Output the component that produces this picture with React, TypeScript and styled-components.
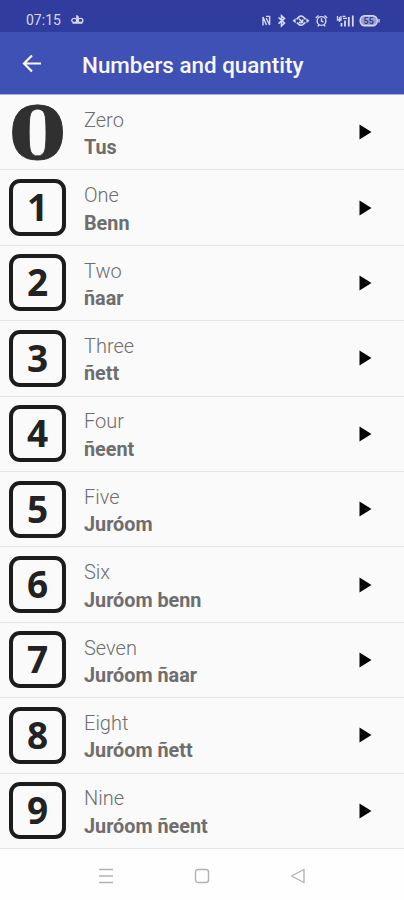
import React from "react";
import styled, { createGlobalStyle } from "styled-components";

const GlobalStyle = createGlobalStyle`
  body { margin: 0; background: #fff; font-family: Roboto, sans-serif; }
  * { box-sizing: border-box; }
`;

const Screen = styled.div`
  width: 404px;
  height: 900px;
  display: flex;
  flex-direction: column;
  overflow: hidden;
  background: #fefefe;
`;

const StatusBar = styled.header`
  height: 32px;
  flex: none;
  display: flex;
  align-items: flex-end;
  justify-content: space-between;
  padding: 0 23px 4px 26px;
  background: #303d9e;
  color: #d5d9f5;
`;

const StatusGroup = styled.div<{ $gap: number }>`
  display: flex;
  align-items: center;
  gap: ${(p) => p.$gap}px;
  height: 16px;
`;

const Clock = styled.span`
  font-size: 14px;
  line-height: 16px;
`;

const AppBar = styled.div`
  height: 63px;
  flex: none;
  display: flex;
  align-items: center;
  padding-left: 20px;
  gap: 38px;
  background: #3f51b5;
  border-bottom: 1px solid #a9aee0;
  color: #f7f7ff;
`;

const Title = styled.h1`
  margin: 4px 0 0;
  font-size: 22.4px;
  font-weight: 500;
  line-height: 28px;
  white-space: nowrap;
`;

const List = styled.main`
  flex: none;
  height: 754px;
  display: grid;
  grid-template-rows: repeat(10, 75.4px);
  background: #fafafa;
`;

const Row = styled.div`
  display: flex;
  align-items: center;
  border-bottom: 1.6px solid #e4e4e4;
  padding: 0 32px 0 9px;
`;

const DigitTile = styled.div`
  width: 57px;
  height: 57px;
  flex: none;
  display: flex;
  align-items: center;
  justify-content: center;
  border: 4px solid #1c1c1c;
  border-radius: 11px;
  color: #222;
  font: 700 37px/48px "Noto Sans", sans-serif;
  padding-bottom: 1px;
`;

const ZeroTile = styled.div`
  width: 57px;
  height: 57px;
  flex: none;
  display: flex;
  align-items: center;
  justify-content: center;
  color: #303030;
  font: 700 72px/57px "DejaVu Serif", serif;
  -webkit-text-stroke: 0.8px #303030;
  padding-top: 2px;
  transform: scaleX(1.15);
`;

const Words = styled.div`
  flex: 1;
  margin: 4px 0 0 18px;
  color: #6e6e6e;
  font-size: 20px;
  line-height: 27.4px;
  white-space: nowrap;
`;

const English = styled.div`
  font-weight: 300;
`;

const Wolof = styled.div`
  font-weight: 700;
  font-size: 19.8px;
`;

const NavBar = styled.nav`
  flex: 1;
  display: flex;
  align-items: center;
  justify-content: center;
  gap: 80px;
  padding-top: 3px;
`;

const entries = [
  ["Zero", "Tus"],
  ["One", "Benn"],
  ["Two", "ñaar"],
  ["Three", "ñett"],
  ["Four", "ñeent"],
  ["Five", "Juróom"],
  ["Six", "Juróom benn"],
  ["Seven", "Juróom ñaar"],
  ["Eight", "Juróom ñett"],
  ["Nine", "Juróom ñeent"],
];

const NotificationIcon = () => (
  <svg width="13" height="12" viewBox="0 0 13 12" fill="none" stroke="currentColor" strokeWidth="1.3">
    <ellipse cx="3.3" cy="6.4" rx="2.5" ry="2" />
    <ellipse cx="9.4" cy="6.4" rx="2.5" ry="2" />
    <path d="M5.9 1v7.8M7 2v6M1.5 9h10" />
  </svg>
);

const StatusIcons = () => (
  <svg width="120" height="16" viewBox="261 12 120 16" fill="none" stroke="currentColor" strokeWidth="1.4">
    <path d="M263 25.5V17l3.5 8M266 16.4h3.6V25l-3.4-7" />
    <path d="M278.5 17.5l6 5.5-3 2.8v-10l3 2.6-6 5.2" strokeWidth="1.6" />
    <path d="M292.8 20.7l2.6-2v4zM309.2 20.7l-2.6-2v4z" fill="currentColor" strokeWidth=".5" />
    <path d="M296.5 19.4l2.7-2.8q2-1.3 4 .2l2.4 2.6M296.8 22.6l2.6 2.2q1.8 1 3.5-.2l2.4-2.2M299 18.8l4 4M299 22c2 1.5 4.2.3 3.7-2.6" strokeWidth="1.6" />
    <circle cx="321.5" cy="21" r="4.4" />
    <path d="M321.5 18.3V21l2 1.2M315.8 18l2.7-2.4M327.2 18l-2.7-2.4M317.8 26.4l1.4-1.7M325.2 26.4l-1.4-1.7" />
    <path d="M337.5 16v4h3.5v-4M339.5 17v5M342.5 16.4h3M343 18.4h4" strokeWidth="1.3" />
    <path d="M341.5 26.5v-3.5M345 26.5v-6M348.8 26.5V17M352.8 26.5V15.5" strokeWidth="1.8" />
    <rect x="360.2" y="15.8" width="17" height="10" rx="4.5" fill="#9aa1d2" />
    <path d="M379 19v3.6" />
    <text x="368.7" y="24" fill="#303d8f" stroke="none" fontSize="9" fontWeight="700" fontFamily="Roboto, sans-serif" textAnchor="middle">55</text>
  </svg>
);

const BackArrow = () => (
  <svg width="24" height="24" viewBox="0 0 24 24" fill="none" stroke="currentColor" strokeWidth="2.2">
    <path d="M21 12.5H4.5M12 4.5l-8 8 8 8" />
  </svg>
);

const PlayIcon = () => (
  <svg width="13" height="16" viewBox="0 0 13 16">
    <path d="M.5.5L12.5 8 .5 15.5z" fill="#050505" />
  </svg>
);

const NavIcon = ({ children }: { children: React.ReactNode }) => (
  <svg width="16" height="16" viewBox="0 0 16 16" fill="none" stroke="#b2b2b2" strokeWidth="1.4">
    {children}
  </svg>
);

export default function App() {
  return (
    <Screen>
      <GlobalStyle />
      <StatusBar>
        <StatusGroup $gap={10}>
          <Clock>07:15</Clock>
          <NotificationIcon />
        </StatusGroup>
        <StatusGroup $gap={0}>
          <StatusIcons />
        </StatusGroup>
      </StatusBar>
      <AppBar>
        <BackArrow />
        <Title>Numbers and quantity</Title>
      </AppBar>
      <List>
        {entries.map(([english, wolof], n) => (
          <Row key={english}>
            {n === 0 ? <ZeroTile>0</ZeroTile> : <DigitTile>{n}</DigitTile>}
            <Words>
              <English>{english}</English>
              <Wolof>{wolof}</Wolof>
            </Words>
            <PlayIcon />
          </Row>
        ))}
      </List>
      <NavBar>
        <NavIcon>
          <path d="M1 1.5h14M1 8h14M1 14.5h14" />
        </NavIcon>
        <NavIcon>
          <rect x="1.5" y="1.5" width="13" height="13" rx="2.5" />
        </NavIcon>
        <NavIcon>
          <path d="M14 1.5v13L1.5 8z" strokeLinejoin="round" />
        </NavIcon>
      </NavBar>
    </Screen>
  );
}
